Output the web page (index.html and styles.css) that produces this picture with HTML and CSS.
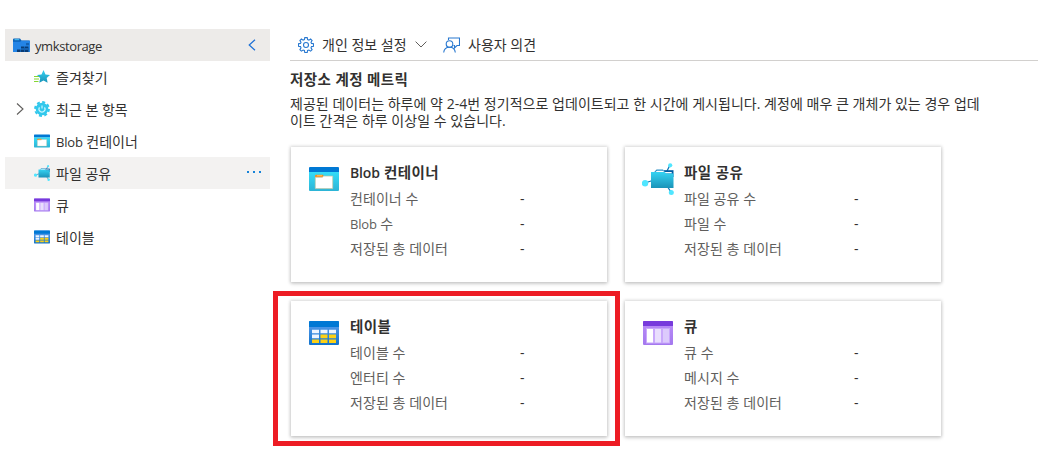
FILE: index.html
```html
<!DOCTYPE html>
<html lang="ko">
<head>
<meta charset="utf-8">
<title>ymkstorage</title>
<link rel="stylesheet" href="styles.css">
</head>
<body>
<svg class="defs" aria-hidden="true">
  <defs>
    <linearGradient id="cyan" x1="0" y1="0" x2="0" y2="1"><stop offset="0" stop-color="#34dcf8"/><stop offset="1" stop-color="#2cb4d6"/></linearGradient>
    <linearGradient id="teal" x1="0" y1="0" x2="0" y2="1"><stop offset="0" stop-color="#35d3f3"/><stop offset="1" stop-color="#1a93b8"/></linearGradient>
    <linearGradient id="blue" x1="0" y1="0" x2="0" y2="1"><stop offset="0" stop-color="#5ea0ef"/><stop offset="1" stop-color="#1173cc"/></linearGradient>
    <linearGradient id="purple" x1="0" y1="0" x2="0" y2="1"><stop offset="0" stop-color="#ba8df8"/><stop offset="1" stop-color="#a478ee"/></linearGradient>
  </defs>
  <symbol id="i-blob" viewBox="0 0 30 24">
    <path fill="url(#cyan)" d="M0 5h30v18a1 1 0 0 1-1 1H1a1 1 0 0 1-1-1z"/>
    <path fill="#0078d4" d="M1 0h28a1 1 0 0 1 1 1v4H0V1a1 1 0 0 1 1-1z"/>
    <path fill="#f78d1e" d="M7 7.700h7l.7 1.400-1.400 1.700H6V8.500z"/>
    <path fill="#fff" stroke="#c3c5a5" stroke-width=".7" d="M6.300 10.300h7l1.400-1.200h9v12.500H6.300z"/>
    <path fill="#ffb34d" d="M8 8h5v1.200H8z"/>
  </symbol>
  <symbol id="i-file" viewBox="0 0 32 32">
    <path stroke="#0f78b8" stroke-width="1.300" fill="none" d="M3 20l9-3M28 2l-3 6M29 29l-4-6"/>
    <path fill="#005ba1" d="M22 7.200h9.500V14H22z"/>
    <path fill="#2a8fc6" d="M12 9.200 14.500 6.600h6.500l2 2.600z"/>
    <path fill="#fff" d="M13.500 9l1.500-1.300h5.500l2.200 1.300h7v1.500H13.500z"/>
    <path fill="url(#teal)" d="M9 9h13.500l2 1.400h7V25H9z"/>
    <circle cx="3" cy="20.300" r="3.200" fill="#50e6ff"/><circle cx="28.200" cy="2.300" r="2.100" fill="#50e6ff"/><circle cx="29.300" cy="29.400" r="2.500" fill="#50e6ff"/>
  </symbol>
  <symbol id="i-table" viewBox="0 0 30 24">
    <rect width="30" height="24" rx="1" fill="url(#blue)"/>
    <path fill="#0078d4" d="M1 0h28a1 1 0 0 1 1 1v5H0V1a1 1 0 0 1 1-1z"/>
    <path fill="#eef5ff" d="M3 8.700h7v3.600H3zM11.500 8.700h7v3.600h-7zM20 8.700h7v3.600h-7zM3 13.600h7v3.600H3z"/>
    <path fill="#fcd116" d="M11.500 13.600h7v3.600h-7zM20 13.600h7v3.600h-7zM3 18.500h7v3.400H3zM11.500 18.500h7v3.400h-7zM20 18.500h7v3.400h-7z"/>
  </symbol>
  <symbol id="i-queue" viewBox="0 0 30 24">
    <rect width="30" height="24" rx="1" fill="url(#purple)"/>
    <path fill="#773adc" d="M1 0h28a1 1 0 0 1 1 1v4H0V1a1 1 0 0 1 1-1z"/>
    <path fill="#c9a8fb" d="M3 7h24v15.500H3z"/>
    <path fill="#fff" d="M4 8h6v13.500H4z"/><path fill="#e9defd" d="M12 8h6v13.500h-6z"/><path fill="#dccafc" d="M20 8h6v13.500h-6z"/>
  </symbol>
</svg>

<div class="app">
  <nav class="sidebar">
    <div class="account">
      <svg class="account-icon" viewBox="0 0 17 15"><path fill="#0b61b8" d="M0 1.500A1 1 0 0 1 1 .5h6l1.500 2H16a1 1 0 0 1 1 1V13H0z"/><path fill="#50c8f5" d="M1.500 1.200h4.700v1H1.500z"/><path fill="#2484e6" d="M0 3.700h7l1.500-.9H17V14H0z"/><path fill="#083c75" d="M4 11.500h3V14H4zM8 8.500h3v2H8zM8 11.500h3V14H8zM12 8.500h3v2h-3zM12 11.500h3V14h-3z"/><path fill="#1461b1" d="M13 5h3v2.200h-3zM7 11.500h1V14H7zM11 8.500h1V14h-1zM15 8.500h1V14h-1z"/></svg>
      <span class="account-name">ymkstorage</span>
      <svg class="collapse" viewBox="0 0 8 12"><path d="M7 .7 1.200 6 7 11.300"/></svg>
    </div>
    <div class="item"><svg class="item-icon" viewBox="0 0 16 14"><path fill="url(#teal)" d="M9.500 0l2 4.400 4.500.5-3.300 3.200.9 4.600-4.100-2.300-4.200 2.300.9-4.600L3 4.900l4.500-.5z"/><path stroke="#86d633" d="M0 6.500h5M0 9h5M0 11.500h4.500"/></svg><span>즐겨찾기</span></div>
    <div class="item"><svg class="expand" viewBox="0 0 8 12"><path d="M1 .5 7 6l-6 5.500"/></svg><svg class="item-icon" viewBox="0 0 16 16"><circle cx="8" cy="8" r="6.300" fill="#32c8ec"/><circle cx="8" cy="8" r="6.900" fill="none" stroke="#32c8ec" stroke-width="2" stroke-dasharray="3 2.419"/><path fill="none" stroke="#c8f6ff" stroke-width="1.200" d="M5.500 6.300a3 3 0 1 0 5 0M8 4.500v3"/></svg><span>최근 본 항목</span></div>
    <div class="item"><svg class="item-icon"><use href="#i-blob"/></svg><span><span class="latin">Blob</span> 컨테이너</span></div>
    <div class="item selected"><svg class="item-icon"><use href="#i-file"/></svg><span>파일 공유</span><span class="more"><i></i><i></i><i></i></span></div>
    <div class="item"><svg class="item-icon"><use href="#i-queue"/></svg><span>큐</span></div>
    <div class="item"><svg class="item-icon"><use href="#i-table"/></svg><span>테이블</span></div>
  </nav>

  <main class="content">
    <div class="toolbar">
      <svg class="tool-icon" viewBox="0 0 16 16"><path d="M6.800.6h2.400l.4 2 1.300.5 1.700-1.100 1.500 1.500L13 5.200l.5 1.200 2 .4v2.400l-2 .4-.5 1.300 1.100 1.700-1.500 1.500-1.700-1.100-1.300.5-.4 2H6.800l-.4-2-1.300-.5-1.700 1.100-1.500-1.500L3 10.900l-.5-1.300-2-.4V6.800l2-.4L3 5.200 1.900 3.500 3.400 2l1.700 1.100 1.300-.5z"/><circle cx="8" cy="8" r="2.500"/></svg>
      <span class="settings">개인 정보 설정</span>
      <svg class="down" viewBox="0 0 12 7"><path d="M.6.6 6 6 11.400.6"/></svg>
      <svg class="tool-icon feedback" viewBox="0 0 17 16"><path d="M5.500 3V1h11v7.500H14L11.500 11V8.500h-1"/><circle cx="6.500" cy="7" r="3.300"/><path d="M.7 15.500c.3-3.300 2.400-5.200 5.800-5.200s5.500 1.900 5.800 5.200"/></svg>
      <span>사용자 의견</span>
    </div>
    <h1 class="heading">저장소 계정 메트릭</h1>
    <p class="description">제공된 데이터는 하루에 약 2-4번 정기적으로 업데이트되고 한 시간에 게시됩니다. 계정에 매우 큰 개체가 있는 경우 업데<br>이트 간격은 하루 이상일 수 있습니다.</p>
    <div class="cards">
      <section class="card"><svg class="card-icon"><use href="#i-blob"/></svg><div><h2><span class="latin">Blob</span> 컨테이너</h2><dl><dt>컨테이너 수</dt><dd>-</dd><dt><span class="latin">Blob</span> 수</dt><dd>-</dd><dt>저장된 총 데이터</dt><dd>-</dd></dl></div></section>
      <section class="card"><svg class="card-icon file"><use href="#i-file"/></svg><div><h2>파일 공유</h2><dl><dt>파일 공유 수</dt><dd>-</dd><dt>파일 수</dt><dd>-</dd><dt>저장된 총 데이터</dt><dd>-</dd></dl></div></section>
      <section class="card marked"><svg class="card-icon"><use href="#i-table"/></svg><div><h2>테이블</h2><dl><dt>테이블 수</dt><dd>-</dd><dt>엔터티 수</dt><dd>-</dd><dt>저장된 총 데이터</dt><dd>-</dd></dl></div></section>
      <section class="card"><svg class="card-icon"><use href="#i-queue"/></svg><div><h2>큐</h2><dl><dt>큐 수</dt><dd>-</dd><dt>메시지 수</dt><dd>-</dd><dt>저장된 총 데이터</dt><dd>-</dd></dl></div></section>
    </div>
  </main>
</div>
</body>
</html>
```
FILE: styles.css
```css
* { box-sizing: border-box; }
body {
  margin: 0;
  min-height: 450px;
  background: #fff;
  color: #323130;
  font: 14px/18px "Open Sans", "Noto Sans CJK KR", sans-serif;
}
.defs { display: block; width: 0; height: 0; }
h1, h2, p, dl, dd { margin: 0; }
span, h1, h2, dt, p { white-space: nowrap; }
.latin { font-size: 13px; letter-spacing: -0.2px; }

.app { display: flex; gap: 20px; min-height: 450px; padding: 29px 0 0 5px; }

.sidebar { width: 265px; flex: none; }
.account { display: flex; align-items: center; height: 32px; padding: 0 14px 0 8px; background: #edebe9; }
.account-icon { width: 17px; height: 15px; }
.account-name { margin-left: 5px; padding-top: 2px; font-size: 13px; letter-spacing: -0.4px; }
.collapse { width: 8px; height: 12px; margin-left: auto; }
.collapse path { fill: none; stroke: #1d70d6; stroke-width: 1.2; }
.item { display: flex; align-items: center; height: 32px; padding: 0 7px 0 29px; gap: 6px; }
.item > span:not(.more) { padding-top: 1px; }
.item-icon { width: 16px; height: 16px; flex: none; }
.expand { width: 8px; height: 12px; margin: 0 4px 0 -18px; }
.expand path { fill: none; stroke: #605e5c; stroke-width: 1.1; }
.selected { background: #f3f2f1; }
.more { display: flex; gap: 4px; margin: -3px 2px 0 auto; }
.more i { width: 2px; height: 2px; background: #1683d8; }

.content { flex: 1; min-width: 0; }
.toolbar { display: flex; align-items: center; height: 32px; padding-left: 8px; border-bottom: 1px solid #d2d0ce; }
.tool-icon { width: 16px; height: 16px; }
.tool-icon path, .tool-icon circle { fill: none; stroke: #2878d0; stroke-width: 1.1; }
.settings { width: 86px; margin-left: 8px; }
.down { width: 12px; height: 7px; margin-left: 7px; }
.down path { fill: none; stroke: #605e5c; }
.feedback { width: 17px; margin: 0 8px 0 16px; }
.heading { margin: 10px 0 0; font-size: 14.5px; line-height: 18px; font-weight: 600; letter-spacing: .4px; }
.description { margin: 6px 0 0; line-height: 17px; letter-spacing: .03px; }

.cards { display: grid; grid-template-columns: 316px 316px; grid-auto-rows: 135px; gap: 19px 18px; margin: 18px 0 0 1px; }
.card { display: flex; gap: 11px; padding: 16px 18px 0; background: #fff; box-shadow: 0 2px 4px rgba(0, 0, 0, .14), 0 0 3px 1px rgba(0, 0, 0, .14); }
.card-icon { width: 30px; height: 24px; margin-top: 4px; flex: none; }
.card-icon.file { width: 32px; height: 32px; margin: 0 -1px 0 -1px; }
h2 { font-size: 14.5px; line-height: 20px; font-weight: 600; letter-spacing: .4px; }
h2 .latin { font-size: 14px; letter-spacing: -0.15px; }
dl { display: grid; grid-template-columns: 170px auto; grid-auto-rows: 25px; line-height: 25px; margin-top: 3px; }
dt { color: #605e5c; letter-spacing: .07px; }
.marked { position: relative; }
.marked::after { content: ""; position: absolute; inset: -10px -13px -10px -18px; border: 5px solid #ed1c24; }
```
